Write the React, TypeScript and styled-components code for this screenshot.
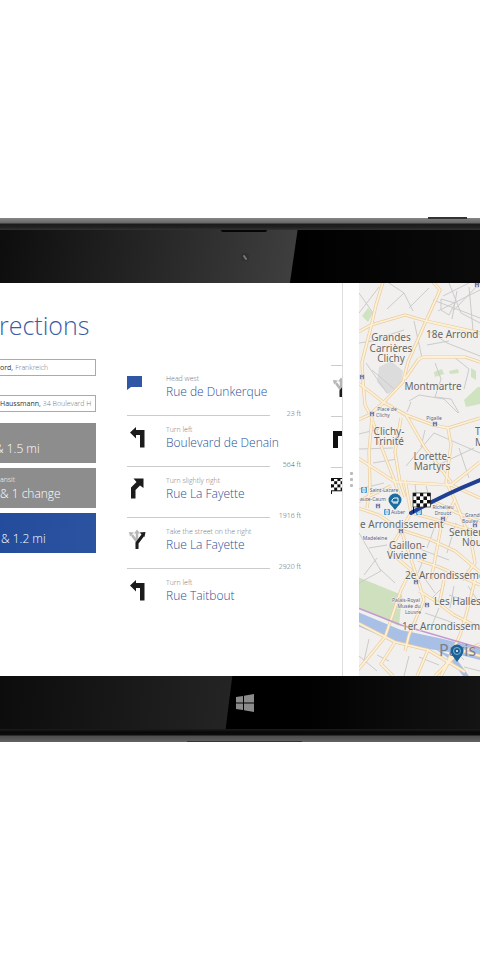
import React from "react";
import styled, { createGlobalStyle } from "styled-components";

const GlobalStyle = createGlobalStyle`
  * { box-sizing: border-box; }
  body {
    margin: 0;
    background: #fff;
    font-family: "Open Sans", "Noto Sans", sans-serif;
  }
  h1, ol, p { margin: 0; padding: 0; }
  ol { list-style: none; }
`;

const Page = styled.main`
  min-height: 100vh;
  display: flex;
  flex-direction: column;
  justify-content: center;
  overflow: hidden;
`;

const Device = styled.section`
  position: relative;
  display: flex;
  flex-direction: column;
`;

const PowerButton = styled.span`
  position: absolute;
  top: -1px;
  right: 13px;
  width: 39px;
  height: 2px;
  background: #333;
`;

const TopEdge = styled.div`
  height: 12px;
  background: linear-gradient(#858585 0, #686868 5px, #1b1b1b 6px, #202020 9px, #333 12px);
`;

const BottomEdge = styled.div`
  position: relative;
  height: 13px;
  background: linear-gradient(#1d1d1d 0, #080808 3px, #0c0c0c 6px, #4c4c4c 7px, #646262 13px);
`;

const DockLip = styled.span`
  position: absolute;
  left: 39%;
  bottom: 0;
  width: 115px;
  height: 1px;
  background: #333;
`;

const Bezel = styled.div<{ $shade: string }>`
  position: relative;
  height: 53px;
  display: flex;
  justify-content: center;
  align-items: center;
  background: ${(p) => p.$shade};
`;

const Glare = styled.span<{ $top: number; $bottom: number; $shade: string }>`
  position: absolute;
  inset: 0;
  background: ${(p) => p.$shade};
  clip-path: polygon(0 0, ${(p) => p.$top}% 0, ${(p) => p.$bottom}% 100%, 0 100%);
`;

const Speaker = styled.span`
  position: absolute;
  top: 0;
  left: 46%;
  width: 46px;
  height: 2px;
  border-radius: 0 0 2px 2px;
  background: #050505;
`;

const CameraIcon = styled.svg`
  position: relative;
  width: 10px;
  height: 10px;
  margin-left: 10px;
`;

const HomeButton = styled.button`
  position: relative;
  display: flex;
  padding: 0;
  margin-left: 10px;
  border: 0;
  background: none;
`;

const Screen = styled.div`
  display: flex;
  min-height: 393px;
  background: #fff;
`;

const TripPane = styled.form`
  flex: none;
  width: 96px;
  padding-top: 22px;
  overflow: hidden;
`;

const Title = styled.h1`
  height: 54px;
  margin-left: -1px;
  font-size: 25px;
  line-height: 40px;
  font-weight: 300;
  color: #3b5ba5;
  white-space: nowrap;
`;

const Field = styled.label`
  display: flex;
  align-items: center;
  height: 17px;
  margin-bottom: 19px;
  border: 1px solid #aaa;
  border-left: 0;
  font-size: 7px;
  line-height: 15px;
  color: #333;
  white-space: nowrap;

  & + & { margin-bottom: 11px; }
`;

const FieldInput = styled.input`
  flex: 1;
  min-width: 0;
  padding: 0 0 0 2px;
  border: 0;
  outline: 0;
  background: none;
  font: 300 7px/15px "Open Sans", sans-serif;
  color: #777;
`;

const Option = styled.button<{ $active?: boolean; $indent?: number }>`
  display: flex;
  flex-direction: column;
  justify-content: flex-end;
  width: 100%;
  height: 40px;
  margin-bottom: 5px;
  padding: 0 0 5px;
  border: 0;
  background: ${(p) => (p.$active ? "linear-gradient(100deg, #234c9c, #2c53a0)" : "#8d8d8d")};
  color: #fff;
  font-family: inherit;
  font-weight: 300;
  font-size: 12px;
  line-height: 18px;
  text-align: left;
  text-indent: ${(p) => p.$indent ?? 0}px;
  white-space: nowrap;
`;

const OptionMode = styled.small`
  font-size: 7px;
  line-height: 10px;
`;

const StepsPane = styled.div`
  flex: none;
  width: 246px;
  display: flex;
  justify-content: space-between;
  padding-left: 31px;
  overflow: hidden;
`;

const StepList = styled.ol`
  width: 174px;
  padding-top: 85px;
`;

const Step = styled.li`
  display: grid;
  grid-template-columns: 39px 1fr;
  align-content: start;
  height: 51px;
  padding-top: 5px;
`;

const StepNote = styled.p`
  font-size: 7px;
  line-height: 11px;
  font-weight: 300;
  color: #777;
`;

const StepStreet = styled.p`
  font-size: 12px;
  line-height: 16px;
  font-weight: 300;
  color: #2b4f94;
  white-space: nowrap;
`;

const StepGlyph = styled.div`
  display: flex;
  padding-top: 2px;
  height: 27px;
`;

const Distance = styled.div`
  grid-column: 1 / -1;
  display: flex;
  align-items: flex-end;
  justify-content: space-between;
  height: 11px;
  margin-top: 8px;
  font-size: 7px;
  line-height: 11px;
  font-weight: 300;
  color: #555;

  &::before {
    content: "";
    width: 143px;
    height: 1px;
    margin-bottom: 3px;
    background: #ccc;
  }
`;

const NextColumn = styled.ol`
  width: 11px;
  padding-top: 82px;
  overflow: hidden;
`;

const NextStep = styled.li`
  height: 51px;
  padding-top: 10px;
  border-top: 1px solid #ccc;
`;

const Splitter = styled.div`
  flex: none;
  width: 17px;
  display: flex;
  flex-direction: column;
  align-items: center;
  justify-content: center;
  gap: 3px;
  border-left: 1px solid #ddd;
`;

const Dot = styled.span`
  width: 3px;
  height: 3px;
  border-radius: 1px;
  background: #bbb;
`;

const MapPane = styled.section`
  flex: 1;
  min-width: 0;
  display: flex;
  background: #f1f0ef;
`;

const MapDrawing = styled.svg`
  width: 100%;
  height: 393px;
  font-family: "Noto Sans", sans-serif;
`;

type GlyphName = "start" | "left" | "right" | "slight" | "fork" | "finish";

function Checkers({ size, columns = 4 }: { size: number; columns?: number }) {
  const cells: React.ReactNode[] = [];
  for (let r = 0; r < 4; r++)
    for (let c = 0; c < columns; c++)
      cells.push(
        <rect key={`${r}-${c}`} x={c * size} y={r * size} width={size} height={size} fill={(r + c) % 2 ? "#fff" : "#111"} />
      );
  return <g>{cells}</g>;
}

function Glyph({ name }: { name: GlyphName }) {
  return (
    <svg width="20" height="22" viewBox="0 0 20 22" aria-hidden="true">
      {name === "start" && <path d="M0 1h15v11H4l-4 3z" fill="#2f57a5" />}
      {name === "left" && <path d="M3 6.500L9 1v3h8.500V21.500H13V9H9v3.500z" fill="#1b1b1b" />}
      {name === "right" && <path d="M2 21V4h9V1l6 5.500-6 6V9H7v12z" fill="#111" />}
      {name === "slight" && <path d="M4 21.500V10.500L9.500 5 6.500 1.500H16.500V11L13 8.500 8.500 13v8.500z" fill="#1b1b1b" />}
      {name === "fork" && (
        <g fill="none">
          <path d="M10 19V14L5 7M10 13V5" stroke="#b5b5b5" strokeWidth="2.500" />
          <path d="M2 4l5 .5-4 4zM10 1.500l3 4H7z" fill="#b5b5b5" />
          <path d="M10 21v-6l6-8" stroke="#1b1b1b" strokeWidth="3" />
          <path d="M18.500 4l-6 .5 5 4.500z" fill="#1b1b1b" />
        </g>
      )}
      {name === "finish" && (
        <g>
          <path d="M.5 0v16" stroke="#111" />
          <Checkers size={3.200} columns={5} />
          <path d="M0 .5h16M0 12.800h16" stroke="#111" />
        </g>
      )}
    </svg>
  );
}

const steps: { glyph: GlyphName; note: string; street: string; distance?: string }[] = [
  { glyph: "start", note: "Head west", street: "Rue de Dunkerque", distance: "23 ft" },
  { glyph: "left", note: "Turn left", street: "Boulevard de Denain", distance: "564 ft" },
  { glyph: "slight", note: "Turn slightly right", street: "Rue La Fayette", distance: "1916 ft" },
  { glyph: "fork", note: "Take the street on the right", street: "Rue La Fayette", distance: "2920 ft" },
  { glyph: "left", note: "Turn left", street: "Rue Taitbout" },
];

const majorRoads = [
  "M24-1L17 22 12 44 3 79 4 99 6 122 13 135 10 169 11 205 8 225",
  "M-1 49L12 42 46 32 67 38 121 50",
  "M74-1L81 7 67 38 49 79 44 99 24 120 10 132-1 137",
  "M46 96L59 77Q62 74 66 74L106 74 121 79",
  "M-1 100L10 108 24 119 47 132 74 142 89 145 121 135",
  "M47 132L66 165 79 182 92 199",
  "M14 139L19 155 36 199 40 212",
  "M42 135L36 169 41 199 46 214",
  "M-1 175L36 199 92 202 121 179",
  "M89 145L92 162 87 199 96 217 82 244 72 297",
  "M-1 225L20 232 42 247 59 297 65 317 50 352 46 368",
  "M46 197L52 230 42 247 30 268 52 287 42 307 26 354-1 387",
  "M52 230L82 238 121 250",
  "M32 203L8 214-1 219",
  "M92 202L121 215M72 217L98 230 121 238",
  "M103 297L116 280 112 258 96 217",
  "M42 247L70 256 96 268 121 289",
  "M59 277L80 284 121 302",
  "M60 308L75 317 95 332 121 345",
  "M85 297L80 322M116 297L107 332 101 352 82 393",
  "M-1 340L36 359 69 367 106 389",
  "M69 367L58 393M36 359L22 381 34 393M76 393L97 372 121 361",
  "M82 393L97 366 121 373",
];

const minorRoads = [
  "M0 10L14 30M0 30L20 4M30 0L45 10 28 26M50 25L70 5M45 10L54 28",
  "M74 17L121 35M79 28L121 7M90 0L102 30 121 40M84 13L110 0M82 16L96 20 90 32 82 27zM121 0L94 28M98 8L93 36M110 4L114 47",
  "M55 38L63 75M7 80L28 110M13 87L35 106M0 60L20 57M17 56L45 47M70 48L88 60 121 73M68 62L90 58",
  "M76 80L82 96 76 114 92 116 100 130M95 74L110 86 105 106M50 118L60 112 85 116 99 130M52 119L48 129",
  "M0 151L20 146M0 166L34 165M14 180L38 176M47 183L75 150 121 170M62 164L66 147M79 182L115 165M100 165L110 195",
  "M0 206L25 200M56 201L59 226M67 203L72 220M0 250L22 288 0 300M10 265L28 262M20 285L36 300M5 292L18 275",
  "M62 290L76 310M86 302L72 316M95 303L91 325M109 303L121 321M90 312L121 322M66 330L95 340M80 325L71 347",
  "M10 356L5 378M18 372L30 378M50 373L45 393M60 374L80 382M90 361L105 377M0 373L18 388M105 384L121 388",
  "M50 262L90 277M67 270L59 290M77 240L68 265M97 240L88 270",
];

const metroStops = [[3, 94], [13, 131], [76, 141], [19, 223], [42, 248], [84, 236], [116, 242], [57, 299], [68, 322], [118, 2]];

type MapLabel = [text: string, x: number, y: number, size: 5 | 6 | 10];

const labels: MapLabel[] = [
  ["Grandes", 32, 58, 10], ["Carrières", 32, 69, 10], ["Clichy", 32, 79, 10],
  ["Montmartre", 74, 107, 10], ["Clichy-", 30, 152, 10], ["Trinité", 30, 162, 10],
  ["Lorette-", 73, 177, 10], ["Martyrs", 73, 187, 10],
  ["Gaillon-", 48, 266, 10], ["Vivienne", 48, 276, 10],
  ["Place de", 28, 128, 5], ["Clichy", 24, 134, 5],
  ["Pigalle", 75, 137, 5], ["Richelieu", 84, 226, 5], ["Drouot", 84, 232, 5],
  ["Auber", 39, 231, 5], ["Saint-Lazare", 25, 209, 5],
  ["Madeleine", 16, 257, 5],
  ["Palais-Royal", 47, 319, 5], ["Musée du", 50, 325, 5], ["Louvre", 54, 331, 5],
];

const edgeLabels: MapLabel[] = [
  ["18e Arrond", 67, 55, 10], ["T", 116, 152, 10], ["M", 116, 163, 10],
  ["e Arrondissement", 1, 245, 10], ["Sentier", 90, 253, 10], ["Nou", 103, 263, 10],
  ["2e Arrondisseme", 46, 296, 10], ["Les Halles", 75, 322, 10], ["1er Arrondisseme", 43, 347, 10],
  ["aute-Caum", 1, 218, 5], ["Grands", 106, 234, 5], ["Boulev", 103, 240, 5],
];

function ParisMap() {
  const halo = { stroke: "#f6f5f3", strokeWidth: 1, paintOrder: "stroke" as const, strokeLinejoin: "round" as const };
  return (
    <MapDrawing viewBox="0 0 121 393" preserveAspectRatio="xMinYMid slice" role="img" aria-label="Map of Paris">
      <rect width="2000" height="393" fill="#f1f0ef" />
      <path d="M-1 294L43 312 40 343-1 324z" fill="#cfe0bf" />
      <path d="M3 33l6-8 5 5-5 9zM105 117l14-13 2 0v17l-14 3zM75 89l8-3 2 5-9 3zM90 88l9-2 1 4-9 1zM112 85l5 3v9l-5-3z" fill="#cfe3c0" />
      <path d="M20 84l12-6 12 10-2 14-13 9-11-12z" fill="#dcdcdc" />
      <path d="M-1 329L42 347 80 355 121 365V377L90 369 43 362-1 343z" fill="#a9c0e6" />
      <path d="M76 366L92 377 104 393h6L96 374z" fill="#a9c0e6" />
      <g fill="none" stroke="#cbcbcb" strokeWidth="1">
        {minorRoads.map((d) => <path key={d} d={d} />)}
      </g>
      <g fill="none" stroke="#e9cda0" strokeWidth="3.200" strokeLinejoin="round">
        {majorRoads.map((d) => <path key={d} d={d} />)}
      </g>
      <g fill="none" stroke="#fdf0d6" strokeWidth="1.800" strokeLinejoin="round">
        {majorRoads.map((d) => <path key={d} d={d} />)}
      </g>
      <path d="M-1 325L42 342 121 365" fill="none" stroke="#c39bd0" strokeWidth="1.500" />
      {metroStops.map(([x, y]) => (
        <g key={`${x}-${y}`}>
          <rect x={x - 2.500} y={y - 2.500} width="5" height="5" rx="1" fill="#c3c6da" />
          <path d={`M${x - 1.500} ${y + 2}v-4l1.500 2 1.500-2v4`} fill="none" stroke="#6c7299" strokeWidth=".9" />
        </g>
      ))}
      <g {...halo}>
        {labels.map(([text, x, y, size]) => (
          <text key={`${text}-${y}`} x={x} y={y} fontSize={size} fill={size < 10 ? "#59617e" : "#666"} textAnchor="middle">{text}</text>
        ))}
        {edgeLabels.map(([text, x, y, size]) => (
          <text key={text} x={x} y={y} fontSize={size} fill={size < 10 ? "#59617e" : "#666"}>{text}</text>
        ))}
      </g>
      <text x="80" y="373" fontSize="16" fill="#7a7f8c">Paris</text>
      {[[5, 207], [28, 229], [60, 229]].map(([x, y]) => (
        <g key={x}>
          <rect x={x - 3} y={y - 3} width="6" height="6" rx="1" fill="#4a9ad0" />
          <path d={`M${x - 1} ${y - 2}v4h2v-4z`} fill="none" stroke="#fff" />
        </g>
      ))}
      <path d="M52 230Q84 212 121 197" fill="none" stroke="#1f3f93" strokeWidth="4" strokeLinecap="round" />
      <g transform="translate(54 210)">
        <path d="M.5 12v8" stroke="#111" />
        <Checkers size={3.500} columns={5} />
        <rect width="17.500" height="14" fill="none" stroke="#222" strokeWidth=".7" />
      </g>
      <path d="M36 227l-4-5h8z" fill="#1b6e9f" />
      <circle cx="36" cy="217" r="6.500" fill="#1b6e9f" />
      <path d="M33 219v-2l2-2h4v4zM34 220h5" fill="none" stroke="#fff" />
      <path d="M98 379l-5-7h10z" fill="#1d6295" />
      <circle cx="98" cy="368" r="6.500" fill="#1d6295" />
      <circle cx="98" cy="368" r="3.500" fill="none" stroke="#7fb2d6" />
      <circle cx="98" cy="368" r="1" fill="#fff" />
    </MapDrawing>
  );
}

export default function App() {
  return (
    <>
      <GlobalStyle />
      <Page>
        <Device>
          <PowerButton />
          <TopEdge />
          <Bezel $shade="linear-gradient(90deg, #000 62%, #0a0a0a)">
            <Glare $top={62} $bottom={60.400} $shade="linear-gradient(100deg, #0d0d0d, #232323 28%, #3f3f3f 62%)" />
            <Speaker />
            <CameraIcon viewBox="0 0 10 10" aria-hidden="true">
              <circle cx="5" cy="5" r="4" fill="#303030" />
              <path d="M4 4l2 3" stroke="#777" strokeWidth="2" strokeLinecap="round" />
            </CameraIcon>
          </Bezel>
          <Screen>
            <TripPane>
              <Title>rections</Title>
              <Field>
                <span>ord,</span>
                <FieldInput aria-label="Start" defaultValue="Frankreich" />
              </Field>
              <Field>
                <span>Haussmann,</span>
                <FieldInput aria-label="Destination" defaultValue="34 Boulevard H" />
              </Field>
              <Option type="button" $indent={-5}>&amp; 1.5 mi</Option>
              <Option type="button">
                <OptionMode>ansit</OptionMode>
                &amp; 1 change
              </Option>
              <Option type="button" $active $indent={1}>&amp; 1.2 mi</Option>
            </TripPane>
            <StepsPane>
              <StepList>
                {steps.map((s) => (
                  <Step key={s.note + s.street}>
                    <StepGlyph><Glyph name={s.glyph} /></StepGlyph>
                    <div>
                      <StepNote>{s.note}</StepNote>
                      <StepStreet>{s.street}</StepStreet>
                    </div>
                    {s.distance && <Distance>{s.distance}</Distance>}
                  </Step>
                ))}
              </StepList>
              <NextColumn>
                {(["fork", "right", "finish"] as GlyphName[]).map((g) => (
                  <NextStep key={g}><Glyph name={g} /></NextStep>
                ))}
              </NextColumn>
            </StepsPane>
            <Splitter><Dot /><Dot /><Dot /></Splitter>
            <MapPane><ParisMap /></MapPane>
          </Screen>
          <Bezel $shade="linear-gradient(90deg, #000 62%, #141414)">
            <Glare $top={48.400} $bottom={47} $shade="linear-gradient(95deg, #0c0c0c, #181818 25%, #242424 48%)" />
            <HomeButton aria-label="Start">
              <svg width="18" height="18" viewBox="0 0 18 18">
                <path d="M0 3l7-1v6.500H0zM8 1.800L18 0v8.500H8zM0 9.500h7V16l-7-1zM8 9.500h10V18L8 16.200z" fill="#8b8b8b" />
              </svg>
            </HomeButton>
          </Bezel>
          <BottomEdge><DockLip /></BottomEdge>
        </Device>
      </Page>
    </>
  );
}
